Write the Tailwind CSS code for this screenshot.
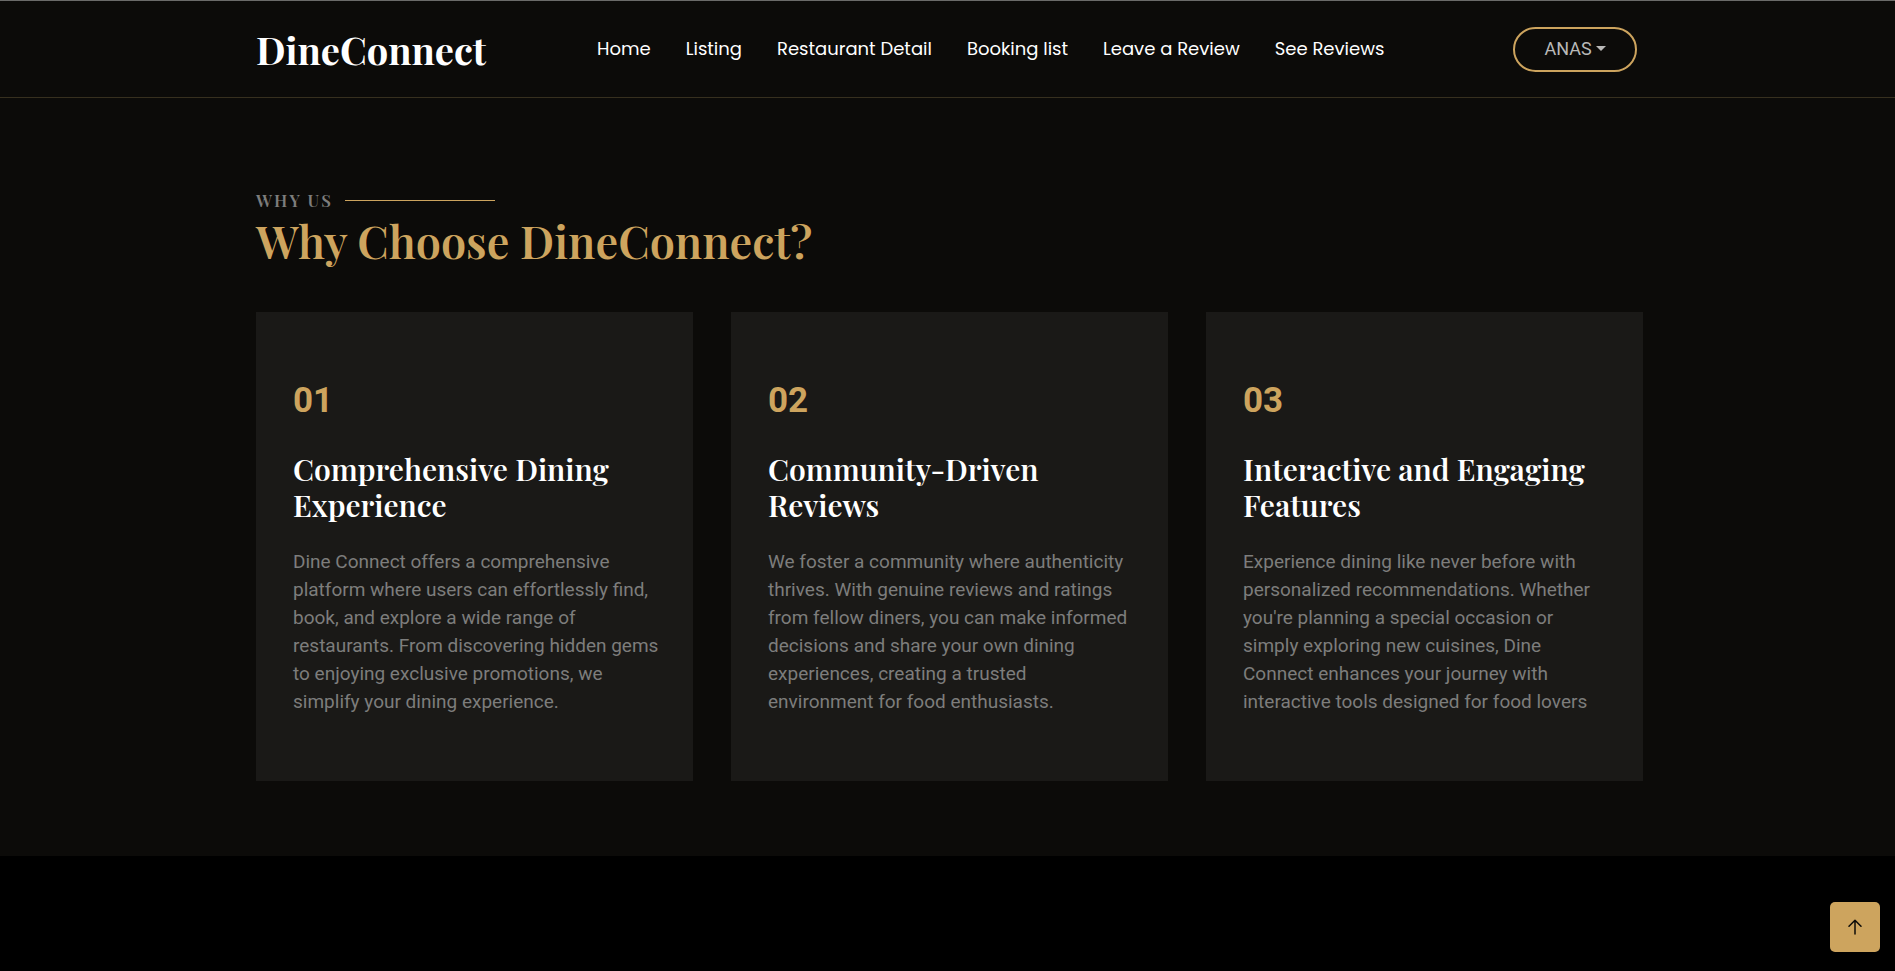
<!DOCTYPE html>
<html lang="en">
<head>
<meta charset="utf-8">
<meta name="viewport" content="width=device-width, initial-scale=1">
<title>DineConnect</title>
<script src="https://cdn.jsdelivr.net/npm/@tailwindcss/browser@4"></script>
</head>
<body class="min-h-screen bg-black font-['Roboto',sans-serif] text-white">
<header class="border-t border-b border-t-[#6b6b69] border-b-[#37301f] bg-[#0c0b09]">
  <div class="flex h-24 items-center justify-between pr-[258px] pl-64">
    <a href="#" class="w-[341px] pt-0.5 font-['Playfair_Display','Liberation_Serif',serif] text-[38px] leading-[48px] font-bold">DineConnect</a>
    <nav class="flex flex-1 gap-[35px] font-['Poppins','Inter',sans-serif] text-[18px] leading-6 whitespace-nowrap">
      <a href="#">Home</a>
      <a href="#">Listing</a>
      <a href="#">Restaurant Detail</a>
      <a href="#">Booking list</a>
      <a href="#">Leave a Review</a>
      <a href="#">See Reviews</a>
    </nav>
    <button type="button" class="flex h-[45px] w-[124px] items-center justify-center gap-1 rounded-full border-2 border-[#cda45e] pb-0.5 text-[18px] text-[#b9b9b8]">ANAS
      <svg class="h-[5px] w-[10px]" viewBox="0 0 10 5" fill="currentColor" aria-hidden="true"><path d="M0 0h10L5 5z"/></svg>
    </button>
  </div>
</header>
<main class="bg-[#0c0b09] pt-[90px] pr-[252px] pb-[75px] pl-64">
  <div class="font-['Playfair_Display','Liberation_Serif',serif]">
    <p class="flex items-center gap-3 text-[17px] leading-[25px] font-semibold tracking-[2px] text-[#7d7d7c]">WHY US<span class="h-px w-[150px] bg-[#cda45e]"></span></p>
    <h1 class="text-[45px] leading-[54px] font-semibold text-[#cda45e]">Why Choose DineConnect?</h1>
  </div>
  <div class="mt-[45px] grid grid-cols-3 gap-[38px]">
    <article class="bg-[#1a1917] px-[37px] pt-[67px] pb-[65px]">
      <span class="block text-[35px] leading-[44px] font-bold text-[#cda45e]">01</span>
      <h2 class="mt-7 font-['Playfair_Display','Liberation_Serif',serif] text-[30px] leading-9 font-semibold">Comprehensive Dining<br>Experience</h2>
      <p class="mt-[25px] text-[19px] leading-7 whitespace-nowrap text-[#7d7d7c]">Dine Connect offers a comprehensive<br>platform where users can effortlessly find,<br>book, and explore a wide range of<br>restaurants. From discovering hidden gems<br>to enjoying exclusive promotions, we<br>simplify your dining experience.</p>
    </article>
    <article class="bg-[#1a1917] px-[37px] pt-[67px] pb-[65px]">
      <span class="block text-[35px] leading-[44px] font-bold text-[#cda45e]">02</span>
      <h2 class="mt-7 font-['Playfair_Display','Liberation_Serif',serif] text-[30px] leading-9 font-semibold">Community-Driven<br>Reviews</h2>
      <p class="mt-[25px] text-[19px] leading-7 whitespace-nowrap text-[#7d7d7c]">We foster a community where authenticity<br>thrives. With genuine reviews and ratings<br>from fellow diners, you can make informed<br>decisions and share your own dining<br>experiences, creating a trusted<br>environment for food enthusiasts.</p>
    </article>
    <article class="bg-[#1a1917] px-[37px] pt-[67px] pb-[65px]">
      <span class="block text-[35px] leading-[44px] font-bold text-[#cda45e]">03</span>
      <h2 class="mt-7 font-['Playfair_Display','Liberation_Serif',serif] text-[30px] leading-9 font-semibold">Interactive and Engaging<br>Features</h2>
      <p class="mt-[25px] text-[19px] leading-7 whitespace-nowrap text-[#7d7d7c]">Experience dining like never before with<br>personalized recommendations. Whether<br>you're planning a special occasion or<br>simply exploring new cuisines, Dine<br>Connect enhances your journey with<br>interactive tools designed for food lovers</p>
    </article>
  </div>
</main>
<a href="#" aria-label="Back to top" class="fixed right-[15px] bottom-[19px] flex size-[50px] items-center justify-center rounded-[5px] bg-[#cda45e] text-[#0c0b09]">
  <svg class="h-4 w-[14px]" viewBox="0 0 14 16" fill="none" stroke="currentColor" stroke-width="1.5" stroke-linecap="round" stroke-linejoin="round" aria-hidden="true"><path d="M7 15V1.500M1 7.300l6-6 6 6"/></svg>
</a>
</body>
</html>
